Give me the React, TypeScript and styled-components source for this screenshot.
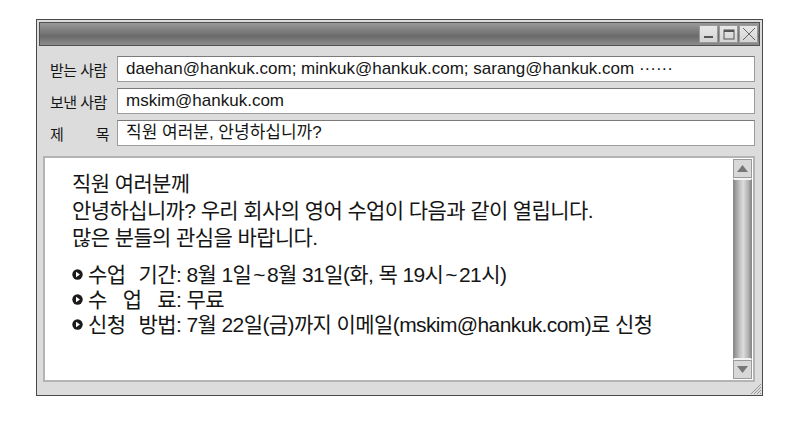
import styled, { createGlobalStyle } from 'styled-components';

const GlobalStyle = createGlobalStyle`
  body {
    margin: 0;
    background: #ffffff;
    font-family: 'Liberation Sans', 'Noto Sans CJK KR', sans-serif;
    color: #151515;
  }
`;

const Page = styled.div`
  padding: 19px 0 0 36px;
`;

const Window = styled.div`
  width: 727px;
  height: 377px;
  box-sizing: border-box;
  border: 1px solid #4a4a4a;
  background: #dcdcdc;
  padding: 2px 2px 0 2px;
  display: flex;
  flex-direction: column;
  position: relative;
`;

const TitleBar = styled.div`
  height: 24px;
  box-sizing: border-box;
  border: 1px solid #505050;
  background: linear-gradient(#9a9a9a, #7a7a7a 40%, #6a6a6a 60%, #8c8c8c);
  display: flex;
  justify-content: flex-end;
  align-items: center;
  padding-right: 1px;
  gap: 1px;
`;

const TitleButton = styled.div`
  width: 19px;
  height: 18px;
  box-sizing: border-box;
  border: 1px solid #9a9a9a;
  background: linear-gradient(#e8e8e8, #d4d4d4);
  display: flex;
  align-items: center;
  justify-content: center;
`;

const Header = styled.div`
  display: flex;
  flex-direction: column;
  gap: 6px;
  padding: 10px 5px 0 11px;
`;

const Row = styled.div`
  display: flex;
  align-items: center;
  height: 26px;
`;

const Label = styled.div<{ $spread?: boolean }>`
  width: 62px;
  margin-right: 5px;
  padding-right: ${props => (props.$spread ? '3px' : '0')};
  box-sizing: border-box;
  display: flex;
  justify-content: ${props => (props.$spread ? 'space-between' : 'flex-start')};
  gap: 4px;
  font-size: 15px;
  letter-spacing: -0.5px;
  white-space: nowrap;
`;

const Field = styled.div`
  flex: 1;
  height: 26px;
  box-sizing: border-box;
  border: 1px solid #9c9c9c;
  border-top-color: #7a7a7a;
  background: #ffffff;
  padding-left: 8px;
  font-size: 17px;
  line-height: 24px;
  white-space: nowrap;
  overflow: hidden;
`;

const Body = styled.div`
  margin: 10px 5px 0 4px;
  height: 226px;
  box-sizing: border-box;
  border: 2px solid #b4b4b4;
  background: #ffffff;
  display: flex;
`;

const Message = styled.div`
  flex: 1;
  padding: 12px 0 0 27px;
  font-size: 21px;
  letter-spacing: -0.6px;
`;

const Paragraph = styled.div`
  line-height: 27px;
`;

const List = styled.div`
  margin-top: 11px;
  line-height: 25px;
`;

const Item = styled.div`
  display: flex;
  align-items: center;
  white-space: nowrap;
`;

const Bullet = styled.svg`
  width: 11px;
  height: 11px;
  margin-right: 5px;
  flex: none;
`;

const ItemLabel = styled.span`
  width: 88px;
  display: flex;
  justify-content: space-between;
  flex: none;
`;

const Tilde = styled.span`
  margin: 0 2px;
`;

const Scrollbar = styled.div`
  width: 19px;
  margin: 1px 1px 1px 0;
  display: flex;
  flex-direction: column;
`;

const ArrowButton = styled.div`
  height: 19px;
  box-sizing: border-box;
  border: 1px solid #9a9a9a;
  background: #d8d8d8;
  display: flex;
  align-items: center;
  justify-content: center;
`;

const Thumb = styled.div`
  flex: 1;
  box-sizing: border-box;
  border-left: 1px solid #8a8a8a;
  border-right: 1px solid #8a8a8a;
  border-top: 2px solid #f4f4f4;
  border-bottom: 2px solid #f4f4f4;
  background: linear-gradient(90deg, #8c8c8c, #c4c4c4 35%, #dcdcdc 55%, #b0b0b0 85%, #8c8c8c);
`;

const Grip = styled.svg`
  position: absolute;
  right: 0;
  bottom: 0;
  width: 12px;
  height: 12px;
`;

const BulletIcon = () => (
  <Bullet viewBox="0 0 11 11">
    <circle cx="5.5" cy="5.5" r="5.2" fill="#1a1a1a" />
    <polygon points="4,2.8 8,5.5 4,8.2" fill="#fff" />
  </Bullet>
);

const items = [
  {
    key: 'period',
    label: ['수업', '기간'],
    text: (
      <>
        8월 1일<Tilde>~</Tilde>8월 31일(화, 목 19시<Tilde>~</Tilde>21시)
      </>
    ),
  },
  { key: 'fee', label: ['수', '업', '료'], text: '무료' },
  {
    key: 'apply',
    label: ['신청', '방법'],
    text: '7월 22일(금)까지 이메일(mskim@hankuk.com)로 신청',
  },
];

const App = () => {
  return (
    <Page>
      <GlobalStyle />
      <Window>
        <TitleBar>
          <TitleButton>
            <svg width="11" height="10" viewBox="0 0 11 10">
              <rect x="1" y="7" width="9" height="2" fill="#555" />
            </svg>
          </TitleButton>
          <TitleButton>
            <svg width="12" height="11" viewBox="0 0 12 11">
              <rect x="1" y="1" width="10" height="9" fill="none" stroke="#555" strokeWidth="1" />
              <rect x="1" y="1" width="10" height="2" fill="#555" />
            </svg>
          </TitleButton>
          <TitleButton>
            <svg width="14" height="14" viewBox="0 0 14 14">
              <path d="M1 1 L13 13 M13 1 L1 13" stroke="#666" strokeWidth="1" />
            </svg>
          </TitleButton>
        </TitleBar>
        <Header>
          <Row>
            <Label>받는 사람</Label>
            <Field>daehan@hankuk.com; minkuk@hankuk.com; sarang@hankuk.com ······</Field>
          </Row>
          <Row>
            <Label>보낸 사람</Label>
            <Field>mskim@hankuk.com</Field>
          </Row>
          <Row>
            <Label $spread>
              <span>제</span>
              <span>목</span>
            </Label>
            <Field>직원 여러분, 안녕하십니까?</Field>
          </Row>
        </Header>
        <Body>
          <Message>
            <Paragraph>
              직원 여러분께
              <br />
              안녕하십니까? 우리 회사의 영어 수업이 다음과 같이 열립니다.
              <br />
              많은 분들의 관심을 바랍니다.
            </Paragraph>
            <List>
              {items.map(item => (
                <Item key={item.key}>
                  <BulletIcon />
                  <ItemLabel>
                    {item.label.map(word => (
                      <span key={word}>{word}</span>
                    ))}
                  </ItemLabel>
                  <span>:&nbsp;{item.text}</span>
                </Item>
              ))}
            </List>
          </Message>
          <Scrollbar>
            <ArrowButton>
              <svg width="11" height="7" viewBox="0 0 11 7">
                <polygon points="5.5,0 11,7 0,7" fill="#777" />
              </svg>
            </ArrowButton>
            <Thumb />
            <ArrowButton>
              <svg width="11" height="7" viewBox="0 0 11 7">
                <polygon points="0,0 11,0 5.5,7" fill="#777" />
              </svg>
            </ArrowButton>
          </Scrollbar>
        </Body>
        <Grip viewBox="0 0 12 12">
          <path d="M11 1 L1 11 M11 4 L4 11 M11 7 L7 11 M11 10 L10 11" stroke="#999" strokeWidth="1" />
        </Grip>
      </Window>
    </Page>
  );
};

export default App;
